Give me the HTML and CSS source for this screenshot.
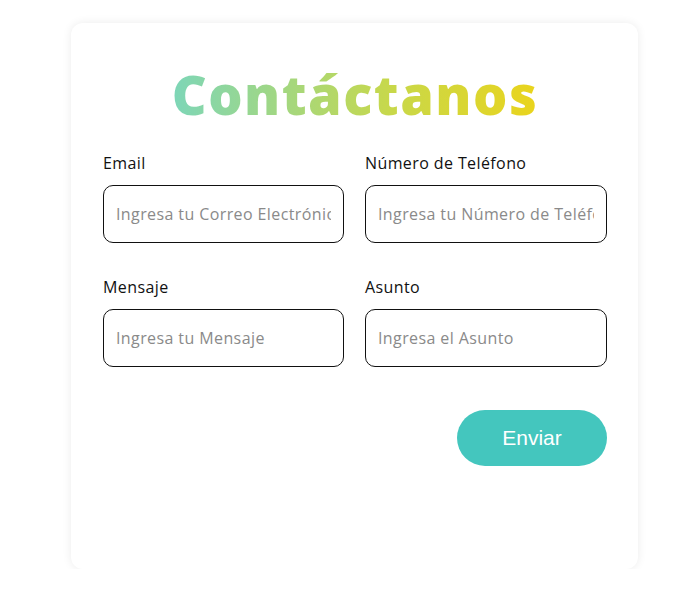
FILE: index.html
```html
<!DOCTYPE html>
<html lang="es">
<head>
<meta charset="utf-8">
<title>Contáctanos</title>
<link rel="stylesheet" href="styles.css">
</head>
<body>
<main class="card">
  <h1 class="title">Contáctanos</h1>
  <form class="form">
    <div class="field">
      <label class="label">Email</label>
      <input class="input" type="text" placeholder="Ingresa tu Correo Electrónico">
    </div>
    <div class="field">
      <label class="label">Número de Teléfono</label>
      <input class="input" type="text" placeholder="Ingresa tu Número de Teléfono">
    </div>
    <div class="field">
      <label class="label">Mensaje</label>
      <input class="input" type="text" placeholder="Ingresa tu Mensaje">
    </div>
    <div class="field">
      <label class="label">Asunto</label>
      <input class="input" type="text" placeholder="Ingresa el Asunto">
    </div>
    <div class="actions">
      <button class="btn" type="button">Enviar</button>
    </div>
  </form>
</main>
</body>
</html>
```

FILE: styles.css
```css
html, body {
  margin: 0;
  background: #ffffff;
}
body {
  padding: 23px 0 0 71px;
  font-family: "Open Sans", "Noto Sans", sans-serif;
}
.card {
  box-sizing: border-box;
  width: 567px;
  height: 546px;
  background: #fff;
  border-radius: 12px;
  box-shadow: 0 0 10px rgba(0,0,0,0.08);
  padding: 42px 31px 0 32px;
}
.title {
  margin: 0;
  text-align: center;
  font-size: 54px;
  font-weight: 800;
  line-height: 58px;
  letter-spacing: 1.5px;
}
.title span,
.title {
  background: linear-gradient(90deg, #7dd6b8 0%, #c8d84a 60%, #ead41c 100%);
  background-size: 366px 100%;
  background-position: center;
  background-repeat: no-repeat;
  -webkit-background-clip: text;
  background-clip: text;
  color: transparent;
}
.form {
  margin-top: 30px;
  display: grid;
  grid-template-columns: 241px 242px;
  column-gap: 21px;
  row-gap: 34px;
}
.field {
  display: flex;
  flex-direction: column;
  gap: 12px;
}
.label {
  font-size: 16px;
  line-height: 20px;
  letter-spacing: 0.4px;
  color: #111;
}
.input {
  box-sizing: border-box;
  height: 58px;
  border: 1px solid #111;
  border-radius: 10px;
  padding: 0 12px;
  font-family: inherit;
  font-size: 16px;
  letter-spacing: 0.4px;
  color: #333;
  outline: none;
}
.input::placeholder {
  color: #8a8a8a;
}
.actions {
  grid-column: 1 / 3;
  display: flex;
  justify-content: flex-end;
  margin-top: 9px;
}
.btn {
  width: 150px;
  height: 56px;
  border: none;
  border-radius: 28px;
  background: #44c6be;
  color: #fff;
  font-family: "Liberation Sans", Arial, sans-serif;
  font-size: 21px;
}
```
